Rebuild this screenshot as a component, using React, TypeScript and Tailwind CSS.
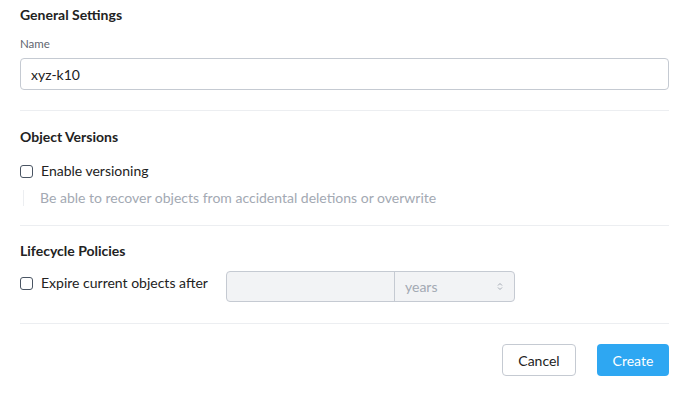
const Checkbox = () => (
  <span className="inline-block w-[13px] h-[13px] shrink-0 rounded-[3px] border border-[#4a5563] bg-white" />
);

export default function App() {
  return (
    <div className="w-[680px] h-[395px] bg-white pl-5 pr-[11px] text-[14px] text-[#222] font-['Lato','Liberation_Sans',sans-serif]">
      <section className="pt-[7px] pb-5 border-b border-[#eceef1]">
        <h2 className="text-[14px] leading-4 font-bold text-[#222]">General Settings</h2>
        <label className="block mt-[14px] text-[11.5px] leading-[14px] text-[#5f6670]">Name</label>
        <input
          className="mt-[7px] w-full h-8 px-[10px] rounded-[4px] border border-[#c5cad2] text-[14px] text-[#222] outline-none"
          defaultValue="xyz-k10"
        />
      </section>

      <section className="pt-[18px] pb-[19px] border-b border-[#eceef1]">
        <h2 className="text-[14px] leading-4 font-bold text-[#222]">Object Versions</h2>
        <div className="mt-[18px] flex items-center h-4">
          <Checkbox />
          <span className="ml-[8px] leading-4">Enable versioning</span>
        </div>
        <p className="mt-[11px] ml-[3px] pl-[16px] border-l border-[#eceef1] leading-4 text-[#a3a9b3]">
          Be able to recover objects from accidental deletions or overwrite
        </p>
      </section>

      <section className="pt-[17px] pb-[21px] border-b border-[#eceef1]">
        <h2 className="text-[14px] leading-4 font-bold text-[#222]">Lifecycle Policies</h2>
        <div className="mt-3 flex items-start">
          <div className="flex items-center h-4 mt-[4px] w-[206px]">
            <Checkbox />
            <span className="ml-[8px] leading-4">Expire current objects after</span>
          </div>
          <div className="flex h-[31px] w-[289px] rounded-[4px] border border-[#c5cad2] bg-[#f2f3f5] overflow-hidden">
            <div className="w-[168px] border-r border-[#c5cad2]" />
            <div className="flex-1 flex items-center justify-between pl-[10px] pr-[11px] text-[#a3a9b3]">
              <span>years</span>
              <svg width="6" height="9" viewBox="0 0 6 9" fill="none" stroke="#a3a9b3" strokeWidth="1">
                <path d="M1 3.5 L3 1.5 L5 3.5" />
                <path d="M1 5.5 L3 7.5 L5 5.5" />
              </svg>
            </div>
          </div>
        </div>
      </section>

      <div className="pt-5 flex justify-end gap-[21px]">
        <button className="h-8 w-[74px] rounded-[4px] border border-[#c5cad2] bg-white text-[14px] text-[#222]">
          Cancel
        </button>
        <button className="h-8 w-[72px] rounded-[4px] bg-[#2ea7f2] text-[14px] text-white">Create</button>
      </div>
    </div>
  );
}
